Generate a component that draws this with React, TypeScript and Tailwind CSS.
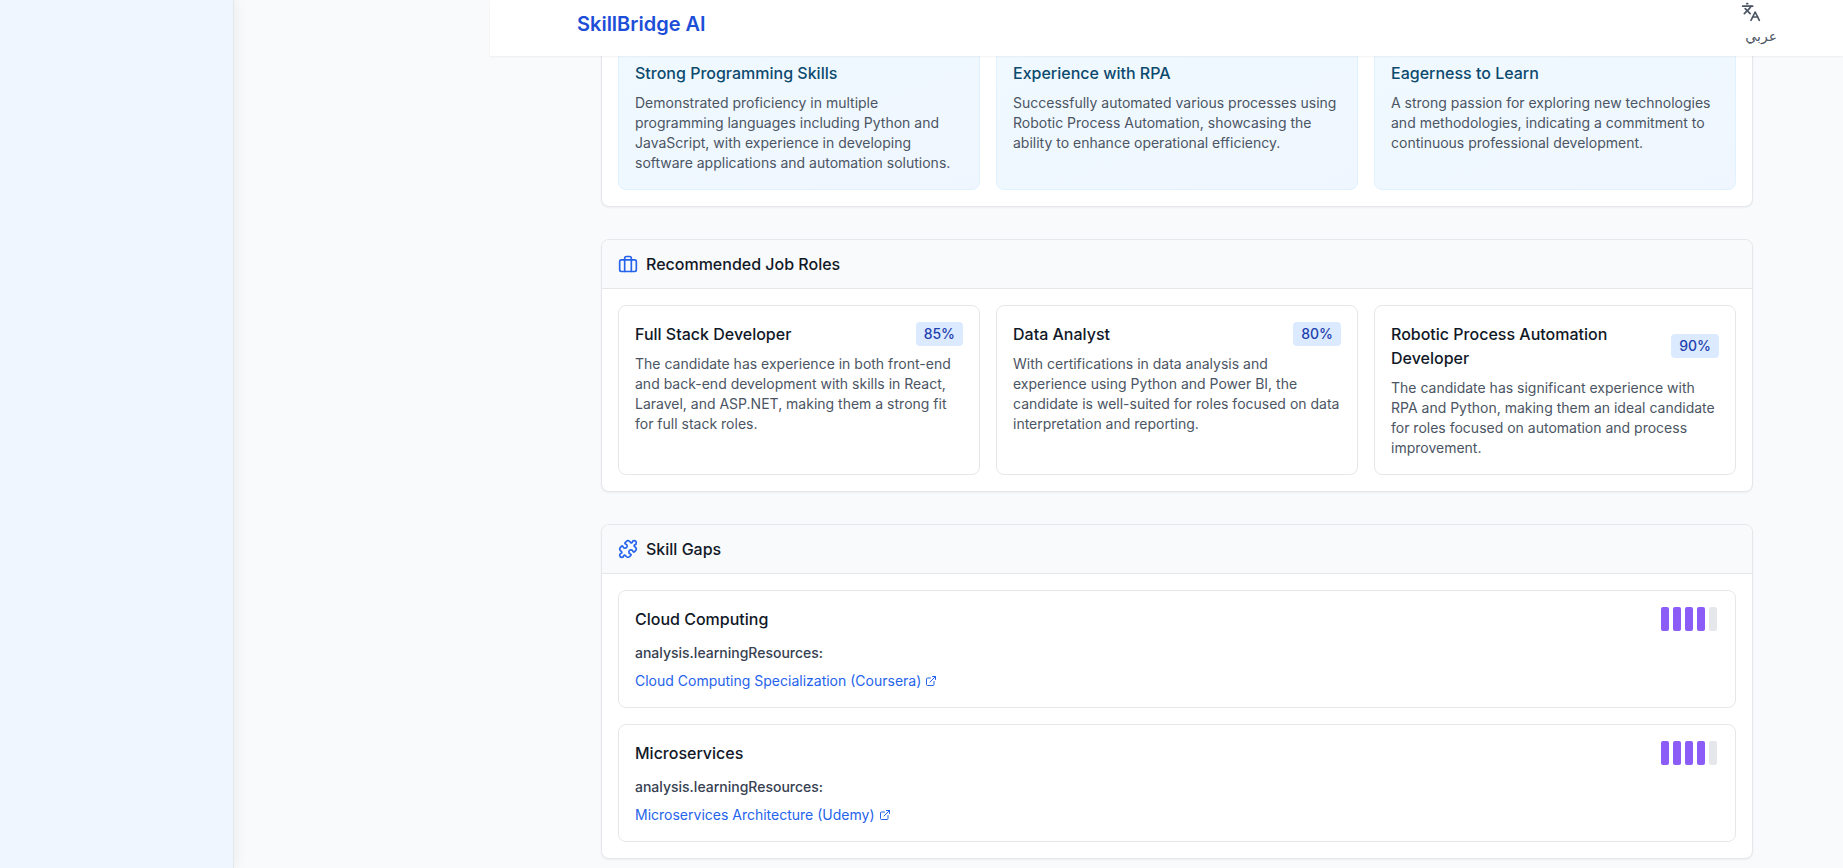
import { Puzzle, ExternalLink, Languages } from "lucide-react";
import type { ReactNode } from "react";

const strengths = [
  { title: "Strong Programming Skills", text: "Demonstrated proficiency in multiple programming languages including Python and JavaScript, with experience in developing software applications and automation solutions." },
  { title: "Experience with RPA", text: "Successfully automated various processes using Robotic Process Automation, showcasing the ability to enhance operational efficiency." },
  { title: "Eagerness to Learn", text: "A strong passion for exploring new technologies and methodologies, indicating a commitment to continuous professional development." },
];

const roles = [
  { title: "Full Stack Developer", match: "85%", text: "The candidate has experience in both front-end and back-end development with skills in React, Laravel, and ASP.NET, making them a strong fit for full stack roles." },
  { title: "Data Analyst", match: "80%", text: "With certifications in data analysis and experience using Python and Power BI, the candidate is well-suited for roles focused on data interpretation and reporting." },
  { title: "Robotic Process Automation Developer", match: "90%", text: "The candidate has significant experience with RPA and Python, making them an ideal candidate for roles focused on automation and process improvement." },
];

const gaps = [
  { title: "Cloud Computing", level: 4, resource: "Cloud Computing Specialization (Coursera)" },
  { title: "Microservices", level: 4, resource: "Microservices Architecture (Udemy)" },
];

function BriefcaseIcon() {
  return (
    <svg viewBox="0 0 24 24" className="size-5 text-[#2563eb]" fill="none" stroke="currentColor" strokeWidth="2" strokeLinecap="round" strokeLinejoin="round" aria-hidden="true">
      <rect x="2" y="7" width="20" height="14" rx="2" ry="2" />
      <path d="M16 21V5a2 2 0 0 0-2-2h-4a2 2 0 0 0-2 2v16" />
    </svg>
  );
}

function Section({ icon, title, children }: { icon: ReactNode; title: string; children: ReactNode }) {
  return (
    <section className="overflow-hidden rounded-lg border border-[#e5e7eb] bg-white shadow-xs">
      <header className="flex items-center gap-2 border-b border-[#e5e7eb] bg-[#f9fafb] px-4 py-3">
        {icon}
        <h2 className="font-medium">{title}</h2>
      </header>
      <div className="p-4">{children}</div>
    </section>
  );
}

export default function App() {
  return (
    <div className="flex min-h-screen bg-[#f9fafb] font-['Inter','DejaVu_Sans',sans-serif] text-base text-[#111827]">
      <aside className="w-[234px] shrink-0 border-r border-[#e5e7eb] bg-[#eff6ff] shadow-[2px_0_12px_rgba(0,0,0,0.06)]" />
      <div className="ml-64 min-w-0 flex-1">
        <div className="sticky top-0 z-10 h-0">
          <header className="h-14 bg-white pl-[21px] shadow-xs">
            <div className="mx-auto flex max-w-[1200px] justify-between">
              <a href="#" className="pt-2.5 text-xl leading-7 font-semibold text-[#1d4ed8]">SkillBridge AI</a>
              <button type="button" className="flex w-9 flex-col gap-1 pt-0.5 text-sm font-medium text-[#4b5563]">
                <Languages className="size-5" aria-hidden="true" />
                <span lang="ar" dir="rtl" className="self-end">عربي</span>
              </button>
            </div>
          </header>
        </div>
        <main className="pl-[21px]">
          <div className="mx-auto flex max-w-6xl flex-col gap-8 pt-7 pb-2">
            <section className="rounded-b-lg border border-t-0 border-[#e5e7eb] bg-white p-4 shadow-xs">
              <div className="grid grid-cols-3 gap-4">
                {strengths.map((s) => (
                  <article key={s.title} className="rounded-lg border border-[#e0f2fe] bg-linear-to-br from-[#f0f9ff] to-[#eff6ff] p-4">
                    <h3 className="mb-2 font-medium text-[#0c4a6e]">{s.title}</h3>
                    <p className="text-sm text-[#4b5563]">{s.text}</p>
                  </article>
                ))}
              </div>
            </section>

            <Section icon={<BriefcaseIcon />} title="Recommended Job Roles">
              <div className="grid grid-cols-3 gap-4">
                {roles.map((r) => (
                  <article key={r.title} className="rounded-lg border border-[#e5e7eb] p-4">
                    <div className="mb-2 flex items-center justify-between">
                      <h3 className="font-medium">{r.title}</h3>
                      <span className="rounded bg-[#dbeafe] px-2 py-0.5 text-sm font-medium text-[#1e40af]">{r.match}</span>
                    </div>
                    <p className="text-sm text-[#4b5563]">{r.text}</p>
                  </article>
                ))}
              </div>
            </Section>

            <Section icon={<Puzzle className="size-5 text-[#2563eb]" aria-hidden="true" />} title="Skill Gaps">
              <div className="flex flex-col gap-4">
                {gaps.map((g) => (
                  <article key={g.title} className="rounded-lg border border-[#e5e7eb] p-4">
                    <div className="mb-3 flex items-center justify-between">
                      <h3 className="font-medium">{g.title}</h3>
                      <div className="flex">
                        {[1, 2, 3, 4, 5].map((n) => (
                          <span key={n} className={n <= g.level ? "mx-0.5 h-6 w-2 rounded-xs bg-[#8b5cf6]" : "mx-0.5 h-6 w-2 rounded-xs bg-[#e5e7eb]"} />
                        ))}
                      </div>
                    </div>
                    <p className="mb-2 text-sm font-medium text-[#374151]">analysis.learningResources:</p>
                    <a href="#" className="flex w-fit items-center gap-1 text-sm text-[#2563eb]">
                      {g.resource}
                      <ExternalLink className="size-3" aria-hidden="true" />
                    </a>
                  </article>
                ))}
              </div>
            </Section>
          </div>
        </main>
      </div>
    </div>
  );
}
